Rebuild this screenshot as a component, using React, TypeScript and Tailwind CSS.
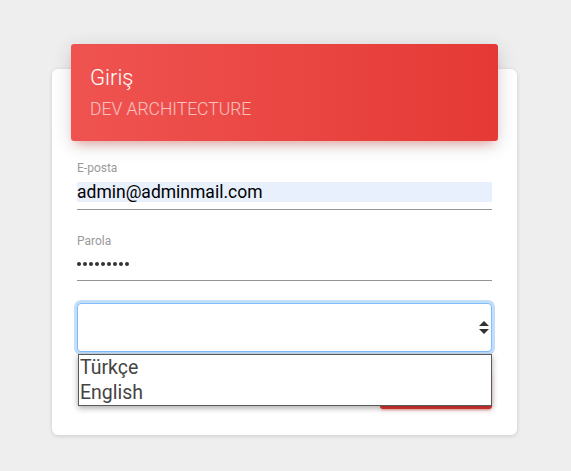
import { useState } from "react";

const languages = ["Türkçe", "English"];

export default function App() {
  const [lang] = useState("");

  return (
    <div className="min-h-[471px] w-full bg-[#eeeeee] pl-[52px] pt-[69px] font-['Roboto',sans-serif]">
      <div className="w-[465px] h-[366px] rounded-[6px] bg-white shadow-[0_1px_4px_rgba(0,0,0,0.14)]">
        {/* header */}
        <div className="relative -top-[25px] mx-[19px] h-[97px] rounded-[3px] bg-linear-to-r from-[#ef5350] to-[#e53935] px-[19px] pt-[21px] shadow-[0_4px_20px_rgba(0,0,0,0.14),0_7px_10px_-5px_rgba(244,67,54,0.4)]">
          <h4 className="text-[22px] leading-[26px] text-white font-light">Giriş</h4>
          <p className="mt-[8px] text-[17.5px] leading-[20px] font-light text-white/65">DEV ARCHITECTURE</p>
        </div>

        <form className="-mt-[25px] px-[25px]">
          <label className="block mt-[19px] h-[16px] text-[12px] leading-[16px] text-[#9a9a9a]">E-posta</label>
          <div className="mt-[6px] h-[28px] border-b border-[#949494]">
            <div className="h-[20px] bg-[#e8f0fe] text-[17.5px] leading-[20px] text-black">admin@adminmail.com</div>
          </div>

          <label className="block mt-[23px] h-[16px] text-[12px] leading-[16px] text-[#9a9a9a]">Parola</label>
          <div className="h-[32px] border-b border-[#949494] pt-[13px] flex gap-[2.5px]">
            {Array.from({ length: 9 }).map((_, i) => (
              <span key={i} className="h-[3.5px] w-[3.5px] rounded-full bg-[#333]" />
            ))}
          </div>

          <div className="relative mt-[22px]">
            <div className="flex h-[49px] items-center justify-end rounded-[4px] border border-[#80bdff] bg-white pr-[2px] shadow-[0_0_0_3px_#c3def9]">
              <span className="text-[#333]">{lang}</span>
              <svg width="10" height="13" viewBox="0 0 10 13">
                <path d="M5 0 L10 5 L0 5 Z" fill="#333" />
                <path d="M0 8 L10 8 L5 13 Z" fill="#333" />
              </svg>
            </div>

            <ul className="absolute left-[1px] top-[51px] z-10 w-[414px] h-[52px] border border-[#5a5a5a] bg-white shadow-[0_2px_6px_rgba(0,0,0,0.35)]">
              {languages.map((l) => (
                <li key={l} className="h-[25px] pl-[1px] text-[19.5px] leading-[25px] text-[#444]">{l}</li>
              ))}
            </ul>

            <div className="mt-[21px] flex justify-end">
              <button type="button" className="h-[36px] w-[112px] rounded-[3px] bg-[#e53935] text-white text-[12px] shadow-[0_2px_2px_rgba(244,67,54,0.14),0_3px_1px_-2px_rgba(244,67,54,0.2),0_1px_5px_rgba(244,67,54,0.12)]">
                GİRİŞ
              </button>
            </div>
          </div>
        </form>
      </div>
    </div>
  );
}
